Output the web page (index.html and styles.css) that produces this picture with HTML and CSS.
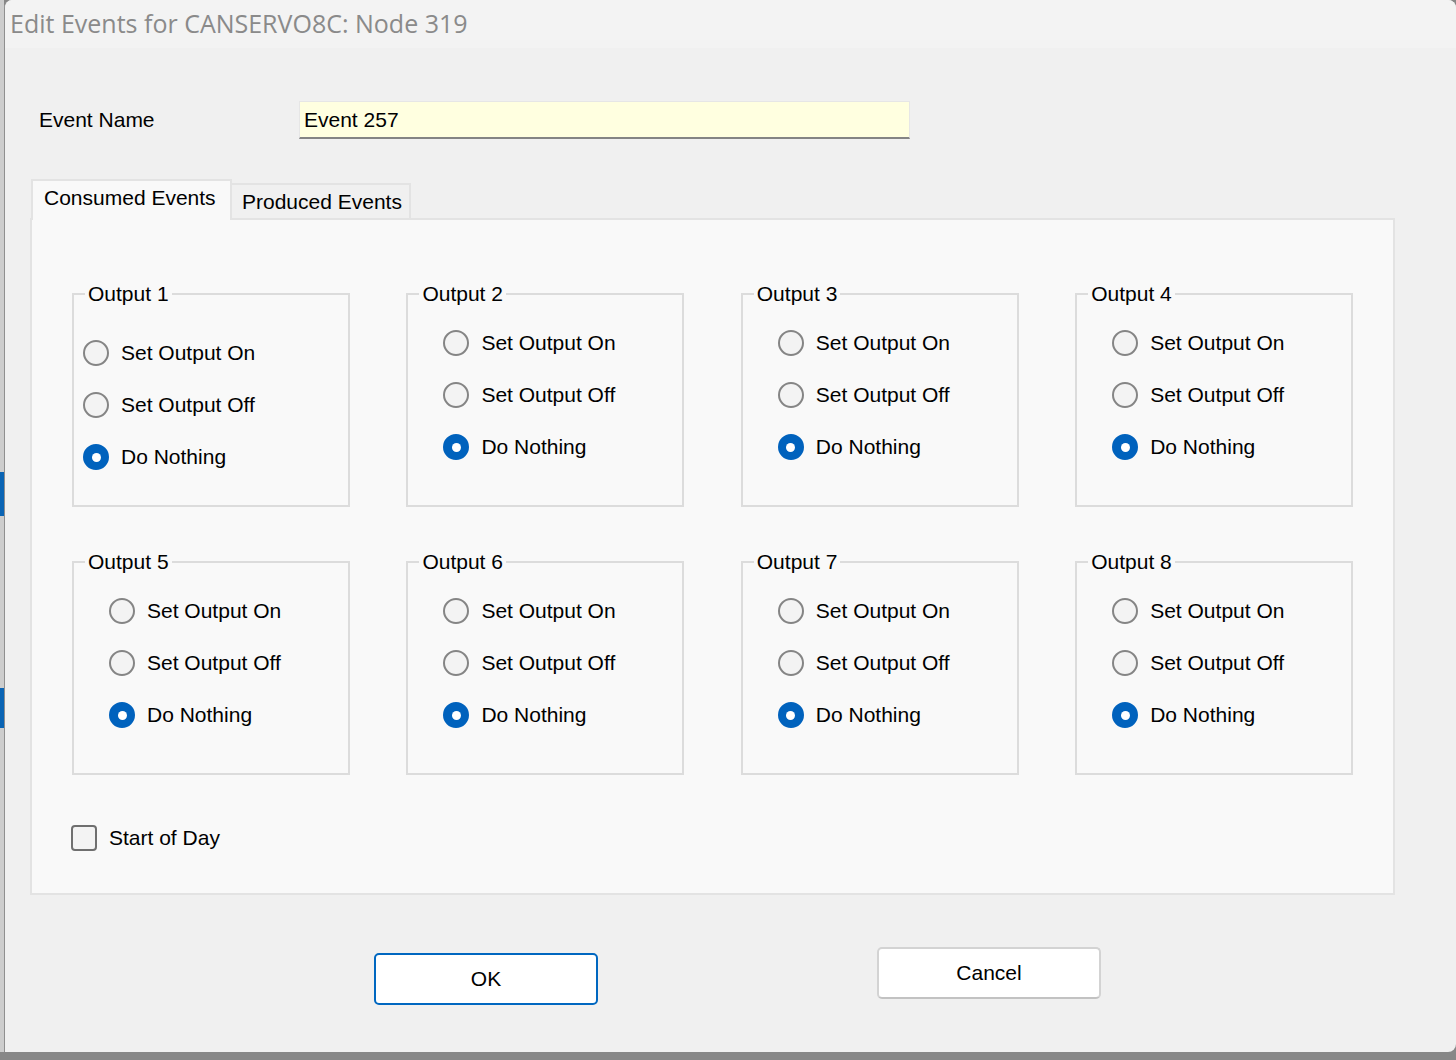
FILE: index.html
```html
<!DOCTYPE html>
<html>
<head>
<meta charset="utf-8">
<title>Edit Events</title>
<link rel="stylesheet" href="styles.css">
</head>
<body>
<div class="screen">
  <div class="desk">
    <div class="behind">
      <div class="bh-space-a"></div>
      <div class="bh-blue-a"></div>
      <div class="bh-space-b"></div>
      <div class="bh-blue-b"></div>
    </div>
    <div class="dialog">
      <div class="titlebar">Edit Events for CANSERVO8C: Node 319</div>
      <div class="content">
        <div class="name-row">
          <label class="name-label" for="evname">Event Name</label>
          <input class="name-field" id="evname" type="text" value="Event 257">
        </div>
        <div class="tabs">
          <div class="tab tab-active">Consumed Events</div>
          <div class="tab tab-inactive">Produced Events</div>
        </div>
        <div class="panel">
          <div class="grid">
            <div class="group first">
              <div class="legend">Output 1</div>
              <div class="option"><span class="radio"></span><span>Set Output On</span></div>
              <div class="option"><span class="radio"></span><span>Set Output Off</span></div>
              <div class="option"><span class="radio on"></span><span>Do Nothing</span></div>
            </div>
            <div class="group">
              <div class="legend">Output 2</div>
              <div class="option"><span class="radio"></span><span>Set Output On</span></div>
              <div class="option"><span class="radio"></span><span>Set Output Off</span></div>
              <div class="option"><span class="radio on"></span><span>Do Nothing</span></div>
            </div>
            <div class="group">
              <div class="legend">Output 3</div>
              <div class="option"><span class="radio"></span><span>Set Output On</span></div>
              <div class="option"><span class="radio"></span><span>Set Output Off</span></div>
              <div class="option"><span class="radio on"></span><span>Do Nothing</span></div>
            </div>
            <div class="group">
              <div class="legend">Output 4</div>
              <div class="option"><span class="radio"></span><span>Set Output On</span></div>
              <div class="option"><span class="radio"></span><span>Set Output Off</span></div>
              <div class="option"><span class="radio on"></span><span>Do Nothing</span></div>
            </div>
            <div class="group">
              <div class="legend">Output 5</div>
              <div class="option"><span class="radio"></span><span>Set Output On</span></div>
              <div class="option"><span class="radio"></span><span>Set Output Off</span></div>
              <div class="option"><span class="radio on"></span><span>Do Nothing</span></div>
            </div>
            <div class="group">
              <div class="legend">Output 6</div>
              <div class="option"><span class="radio"></span><span>Set Output On</span></div>
              <div class="option"><span class="radio"></span><span>Set Output Off</span></div>
              <div class="option"><span class="radio on"></span><span>Do Nothing</span></div>
            </div>
            <div class="group">
              <div class="legend">Output 7</div>
              <div class="option"><span class="radio"></span><span>Set Output On</span></div>
              <div class="option"><span class="radio"></span><span>Set Output Off</span></div>
              <div class="option"><span class="radio on"></span><span>Do Nothing</span></div>
            </div>
            <div class="group">
              <div class="legend">Output 8</div>
              <div class="option"><span class="radio"></span><span>Set Output On</span></div>
              <div class="option"><span class="radio"></span><span>Set Output Off</span></div>
              <div class="option"><span class="radio on"></span><span>Do Nothing</span></div>
            </div>
          </div>
          <div class="checkrow"><span class="checkbox"></span><span>Start of Day</span></div>
        </div>
        <div class="buttons">
          <div class="btn primary">OK</div>
          <div class="btn">Cancel</div>
        </div>
      </div>
    </div>
  </div>
  <div class="bottom-strip"></div>
</div>
</body>
</html>
```
FILE: styles.css
```css
* {
  box-sizing: border-box;
}

body {
  margin: 0;
  width: 1456px;
  height: 1060px;
  overflow: hidden;
  background: #878787;
  font-family: "Liberation Sans", Arial, sans-serif;
  font-size: 21px;
  color: #000;
}

.screen {
  display: flex;
  flex-direction: column;
  height: 1060px;
}

.desk {
  display: flex;
  height: 1052px;
}

.behind {
  width: 4px;
  background: #cdcdcd;
  display: flex;
  flex-direction: column;
}

.bh-space-a {
  height: 472px;
}

.bh-blue-a {
  height: 44px;
  background: #0a64b4;
}

.bh-space-b {
  height: 172px;
}

.bh-blue-b {
  height: 40px;
  background: #0a64b4;
}

.dialog {
  flex: 1;
  background: #f0f0f0;
  border-left: 1px solid #8f8f8f;
  border-top-left-radius: 8px;
  border-top-right-radius: 8px;
  border-bottom-right-radius: 8px;
  overflow: hidden;
  display: flex;
  flex-direction: column;
}

.titlebar {
  height: 48px;
  flex: none;
  background: #f3f3f3;
  display: flex;
  align-items: center;
  padding-left: 5px;
  padding-bottom: 2px;
  font-family: "Open Sans", "Noto Sans", sans-serif;
  font-size: 25px;
  color: #8a8a8a;
}

.content {
  padding: 53px 0 0 25px;
}

.name-row {
  display: flex;
  align-items: center;
  height: 38px;
  padding-left: 9px;
}

.name-label {
  width: 260px;
}

.name-field {
  width: 611px;
  height: 38px;
  margin: 0;
  background: #ffffe0;
  border: 1px solid #e6e6e6;
  border-bottom: 2px solid #848484;
  padding: 0 4px;
  font: inherit;
  color: #000;
  outline: none;
}

.tabs {
  display: flex;
  align-items: flex-end;
  height: 41px;
  margin-top: 40px;
  padding-left: 1px;
}

.tab {
  border: 2px solid #e3e3e3;
  border-bottom: none;
  line-height: 24px;
  padding-top: 5px;
}

.tab-active {
  width: 201px;
  height: 41px;
  background: #f9f9f9;
  position: relative;
  z-index: 1;
  padding-left: 11px;
}

.tab-inactive {
  width: 179px;
  height: 37px;
  background: #f0f0f0;
  border-left: none;
  padding-left: 10px;
}

.panel {
  position: relative;
  margin-top: -2px;
  width: 1365px;
  height: 677px;
  border: 2px solid #e3e3e3;
  background: #f9f9f9;
  padding: 73px 0 0 40px;
}

.grid {
  display: grid;
  grid-template-columns: repeat(4, 278px);
  grid-auto-rows: 214px;
  column-gap: 56.4px;
  row-gap: 54px;
}

.group {
  position: relative;
  border: 2px solid #dcdcdc;
  padding: 35px 0 0 35px;
}

.group.first {
  padding: 45px 0 0 9px;
}

.legend {
  position: absolute;
  top: -13px;
  left: 11px;
  padding: 0 3px;
  background: #f9f9f9;
  line-height: 24px;
}

.option {
  display: flex;
  align-items: center;
  gap: 12px;
  height: 26px;
  line-height: 26px;
  margin-bottom: 26px;
}

.radio {
  flex: none;
  width: 26px;
  height: 26px;
  border-radius: 50%;
  border: 2px solid #858585;
  background: #f3f3f3;
}

.radio.on {
  background: #0062bd;
  border-color: #0062bd;
  display: flex;
  align-items: center;
  justify-content: center;
}

.radio.on::after {
  content: "";
  width: 9px;
  height: 9px;
  border-radius: 50%;
  background: #fff;
}

.checkrow {
  display: flex;
  align-items: center;
  gap: 12px;
  height: 26px;
  line-height: 26px;
  margin-top: 50px;
  margin-left: -1px;
}

.checkbox {
  flex: none;
  width: 26px;
  height: 26px;
  border: 2px solid #6f6f6f;
  border-radius: 4px;
  background: #f3f3f3;
}

.buttons {
  display: flex;
  align-items: flex-start;
  gap: 279px;
  margin-top: 52px;
  padding-left: 344px;
}

.btn {
  width: 224px;
  height: 52px;
  background: #fff;
  border: 2px solid #d3d3d3;
  border-bottom-color: #c2c2c2;
  border-radius: 5px;
  display: flex;
  align-items: center;
  justify-content: center;
}

.btn.primary {
  border-color: #0067c0;
  margin-top: 6px;
}

.bottom-strip {
  height: 8px;
  background: #878787;
}
```
